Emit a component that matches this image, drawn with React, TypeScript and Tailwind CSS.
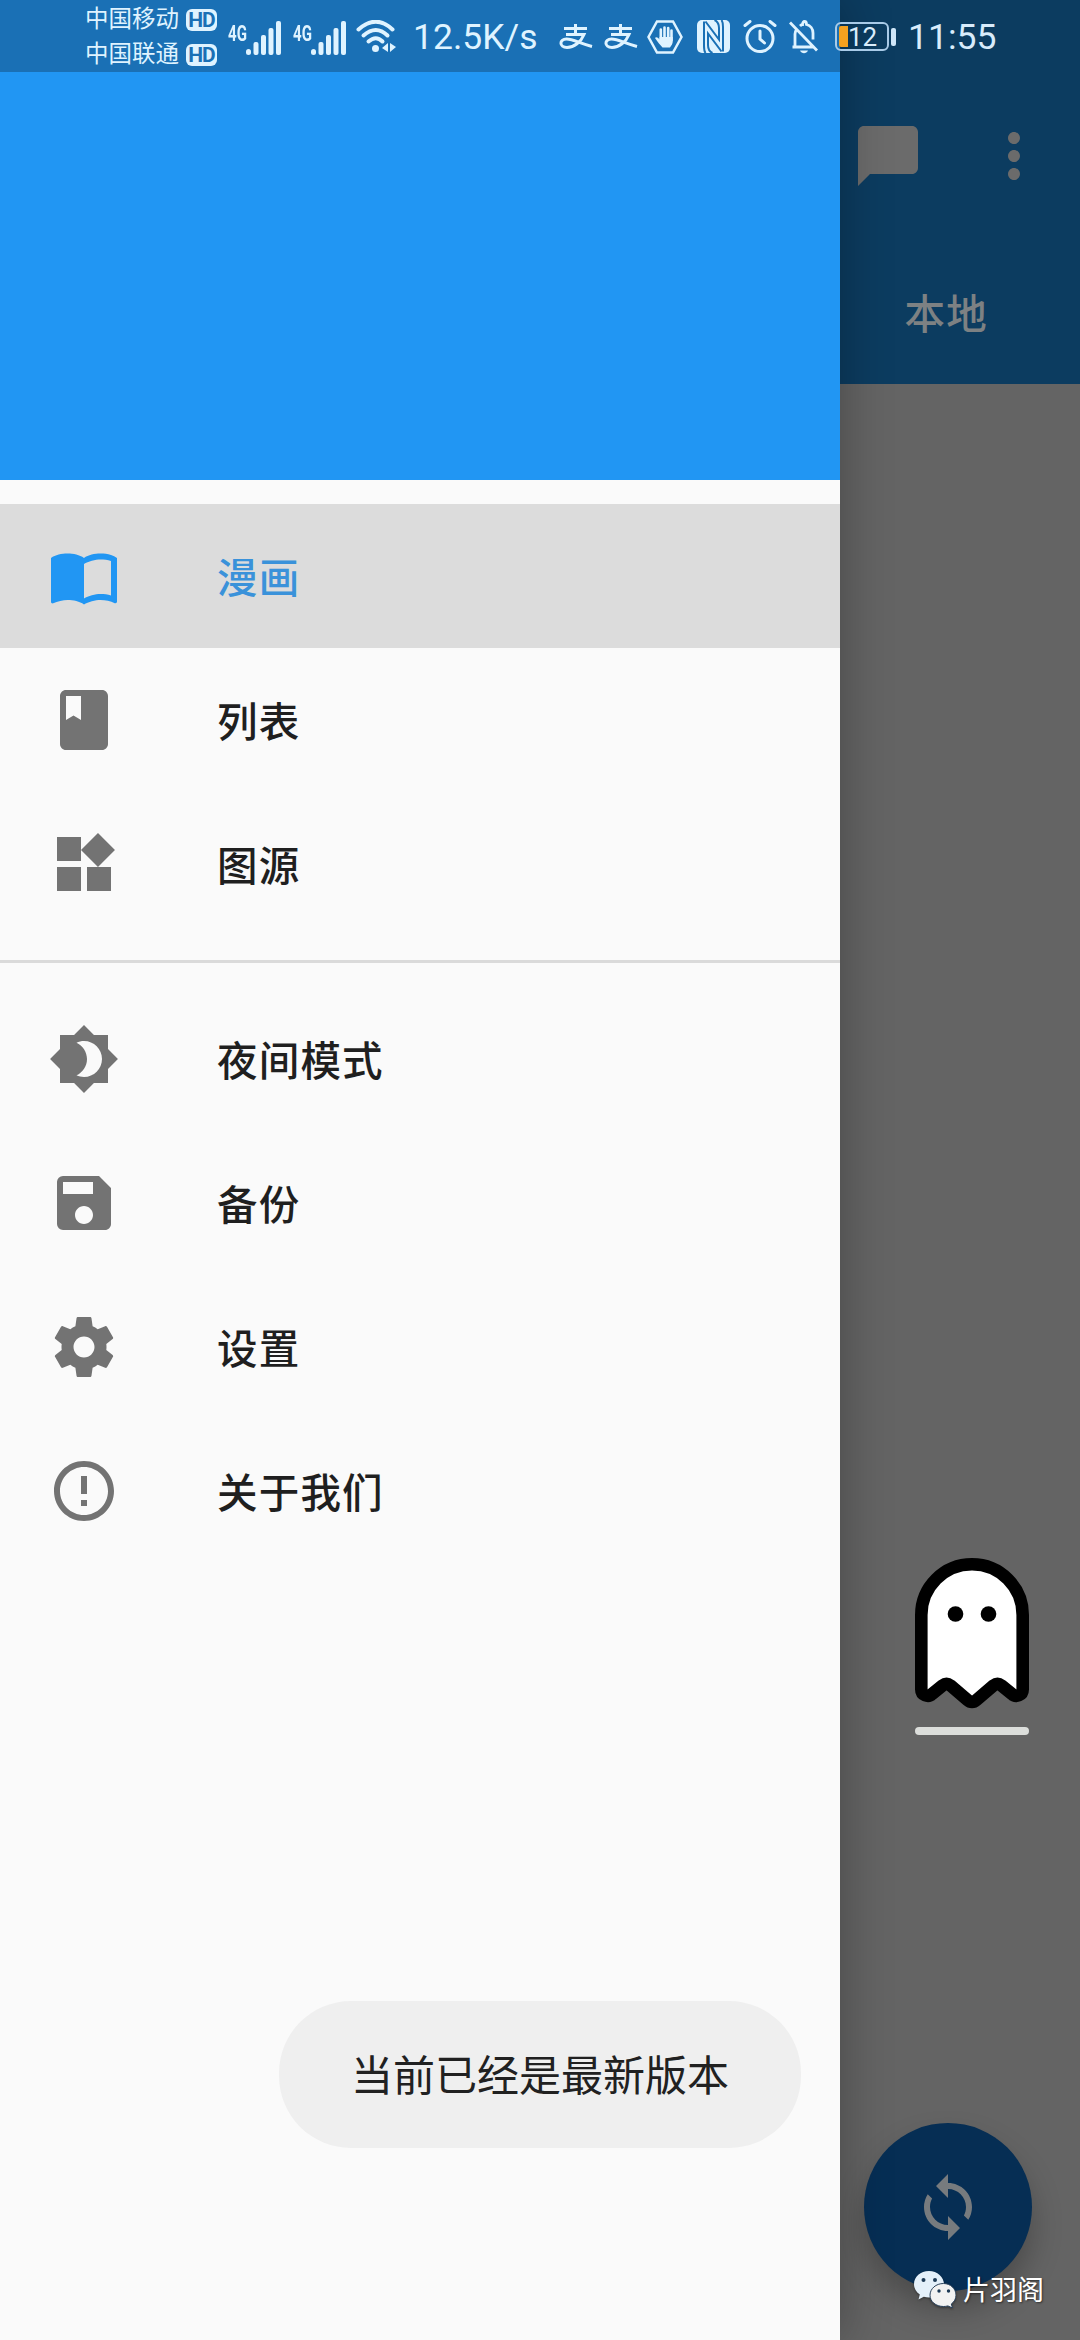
import type { ReactNode } from 'react';
import {
  MdBrightness4,
  MdChatBubble,
  MdClass,
  MdErrorOutline,
  MdMoreVert,
  MdSave,
  MdSync,
  MdWidgets,
} from 'react-icons/md';

type Item = {
  label: string;
  icon: ReactNode;
  active?: boolean;
};

function BookIcon() {
  return (
    <svg viewBox="0 0 24 24" className="size-[72px]" fill="currentColor">
      <path d="M21 5c-1.11-.35-2.33-.5-3.5-.5-1.95 0-4.05.4-5.5 1.5-1.45-1.1-3.55-1.5-5.5-1.5S2.45 4.9 1 6v14.65c0 .25.25.5.5.5.1 0 .15-.05.25-.05C3.1 20.45 5.05 20 6.5 20c1.95 0 4.05.4 5.5 1.5 1.35-.85 3.8-1.5 5.5-1.5 1.65 0 3.35.3 4.75 1.05.1.05.15.05.25.05.25 0 .5-.25.5-.5V6c-.6-.45-1.25-.75-2-1zm0 13.5c-1.1-.35-2.3-.5-3.5-.5-1.7 0-4.15.65-5.5 1.5V8c1.35-.85 3.8-1.5 5.5-1.5 1.2 0 2.4.15 3.5.5v11.5z" />
    </svg>
  );
}

function GearIcon() {
  return (
    <svg viewBox="0 0 24 24" className="size-[72px]" fill="currentColor">
      <path d="M19.43 12.98c.04-.32.07-.64.07-.98s-.03-.66-.07-.98l2.11-1.65c.19-.15.24-.42.12-.64l-2-3.46c-.12-.22-.39-.3-.61-.22l-2.49 1c-.52-.4-1.08-.73-1.69-.98l-.38-2.65C14.46 2.18 14.25 2 14 2h-4c-.25 0-.46.18-.49.42l-.38 2.65c-.61.25-1.17.59-1.69.98l-2.49-1c-.23-.09-.49 0-.61.22l-2 3.46c-.13.22-.07.49.12.64l2.11 1.65c-.04.32-.07.65-.07.98s.03.66.07.98l-2.11 1.65c-.19.15-.24.42-.12.64l2 3.46c.12.22.39.3.61.22l2.49-1c.52.4 1.08.73 1.69.98l.38 2.65c.03.24.24.42.49.42h4c.25 0 .46-.18.49-.42l.38-2.65c.61-.25 1.17-.59 1.69-.98l2.49 1c.23.09.49 0 .61-.22l2-3.46c.12-.22.07-.49-.12-.64l-2.11-1.65zM12 15.5c-1.93 0-3.5-1.57-3.5-3.5s1.57-3.5 3.5-3.5 3.5 1.57 3.5 3.5-1.57 3.5-3.5 3.5z" />
    </svg>
  );
}

const mainItems: Item[] = [
  { label: '漫画', icon: <BookIcon />, active: true },
  { label: '列表', icon: <MdClass className="size-[72px]" /> },
  { label: '图源', icon: <MdWidgets className="size-[72px]" /> },
];

const moreItems: Item[] = [
  { label: '夜间模式', icon: <MdBrightness4 className="size-[72px]" /> },
  { label: '备份', icon: <MdSave className="size-[72px]" /> },
  { label: '设置', icon: <GearIcon /> },
  { label: '关于我们', icon: <MdErrorOutline className="size-[72px]" /> },
];

function DrawerItem({ label, icon, active }: Item) {
  return (
    <li className={active ? 'flex h-36 items-center bg-[#dcdcdc] pl-12 text-[#2196f3]' : 'flex h-36 items-center pl-12 text-[#737373]'}>
      {icon}
      <span className={active ? 'ml-[97px] pt-[7px] text-[40.5px] leading-none font-medium tracking-[1.2px] text-[#3a92da]' : 'ml-[97px] pt-[7px] text-[40.5px] leading-none font-medium tracking-[1.2px] text-[#1f1f1f]'}>
        {label}
      </span>
    </li>
  );
}

function Carrier({ name }: { name: string }) {
  return (
    <div className="flex h-[35px] items-center">
      <span className="w-[101px] text-[23.5px] leading-none">{name}</span>
      <span className="flex h-[22px] w-[31px] items-center justify-center rounded-[6px] bg-[#dff3ff] text-[21px] leading-none font-bold tracking-tighter text-[#1a70b5]">
        HD
      </span>
    </div>
  );
}

function Signal() {
  return (
    <div className="flex w-[54px]">
      <span className="w-[18px] origin-left scale-x-[0.7] text-[21.5px] leading-[30px] font-bold">4G</span>
      <svg viewBox="0 0 36 34" className="mt-0.5 h-[34px] w-9" fill="currentColor">
        <rect x="0" y="28" width="5" height="6" rx="2.5" />
        <rect x="7.5" y="21" width="5" height="13" rx="2" />
        <rect x="15" y="14" width="5" height="20" rx="2" />
        <rect x="22.5" y="7" width="5" height="27" rx="2" />
        <rect x="30" y="0" width="5" height="34" rx="2" />
      </svg>
    </div>
  );
}

function WifiIcon() {
  return (
    <svg viewBox="0 0 40 34" className="ml-[9px] h-[34px] w-10" fill="none" stroke="currentColor" strokeWidth="4" strokeLinecap="round">
      <path d="M2.5 9.5Q20-6 36.5 9.5" />
      <path d="M7.5 15.5Q20 4.5 31.5 15.5" />
      <path d="M12.5 21.5Q20 15 26.5 21.5" />
      <circle cx="19.5" cy="28.5" r="3.5" fill="currentColor" stroke="none" />
      <path d="M26 28l6-5v9zM40 27l-6-4v9z" fill="currentColor" stroke="none" />
    </svg>
  );
}

function AlipayIcon() {
  return (
    <svg viewBox="0 0 34 26" className="h-[26px] w-[34px]" fill="none" stroke="currentColor" strokeWidth="3">
      <path d="M5 4.5h23M16.5 0v10M7 10.500h18C22 18 15 23.500 8 23.500c-8 0-8-8.500-.5-8.500C14 15 20 19 33 22.500" />
    </svg>
  );
}

function HandIcon() {
  return (
    <svg viewBox="0 0 36 34" className="ml-[9px] h-[34px] w-9" fill="none" stroke="currentColor">
      <path d="M10 1.5h16L34.5 17 26 32.5H10L1.5 17z" strokeWidth="2.5" />
      <path d="M13.8 9.5V19M17.5 7.5V18M21.2 8V18M24.5 10.5V20" strokeWidth="2.6" strokeLinecap="round" />
      <path d="M12.5 17h13.3v4c0 3-1.5 4.5-2.8 6.5h-7.500c-2-2.500-5.500-6-7.500-9.500 1-1.500 3-.5 4.500 1.500z" fill="currentColor" stroke="none" />
    </svg>
  );
}

function NfcIcon() {
  return (
    <svg viewBox="0 0 34 34" className="ml-[14px] size-[34px]">
      <rect width="33" height="33" rx="5" fill="currentColor" />
      <path d="M8.5 1.5L22 19.500V8Q22 2 17.500 0M24.500 31.500L11 13.500V25Q11 31 15.500 33M24.500 0Q26 2 26 7V31.500M8.500 33Q7 31 7 26V1.500" fill="none" stroke="#1a70b5" strokeWidth="2" />
    </svg>
  );
}

function AlarmIcon() {
  return (
    <svg viewBox="0 0 34 34" className="ml-3 size-[34px]" fill="none" stroke="currentColor" strokeWidth="3" strokeLinecap="round">
      <circle cx="17" cy="18.5" r="13" />
      <path d="M17 11v8l4.5 4M2 5.5L7 1.5M32 5.5L27 1.5" />
    </svg>
  );
}

function BellOffIcon() {
  return (
    <svg viewBox="0 0 30 34" className="ml-3 h-[34px] w-[30px]" fill="none" stroke="currentColor" strokeWidth="2.8">
      <path d="M1 2.5L28 30.500M3.500 27H24M6 26V14c0-2 .5-3 1.500-4.500M11 6c1-1 2-1.500 2.500-1.500 0-4 4-4 4 0 4 1 6.500 4.500 6.500 8.500v6.500" />
      <path d="M11 30.500h8c-1.500 3.500-6.500 3.500-8 0z" fill="currentColor" stroke="none" />
    </svg>
  );
}

function Battery() {
  return (
    <div className="ml-4 flex items-center text-[#d9ecfb]">
      <div className="flex h-[29px] w-[54px] items-center rounded-[6px] border-2 border-[#a9cbe8] pl-[2px]">
        <span className="h-[21px] w-[9px] rounded-l-xs bg-[#f5a11f]" />
        <span className="text-[26px] leading-none">12</span>
      </div>
      <span className="ml-0.5 h-[18px] w-[5px] rounded-[2px] bg-[#cfe6f8]" />
    </div>
  );
}

function StatusBar() {
  return (
    <div className="absolute inset-x-0 top-0 flex h-[73px] items-center pl-[85px] text-[#dff3ff]">
      <div className="flex w-[143px] shrink-0 flex-col pt-0.5">
        <Carrier name="中国移动" />
        <Carrier name="中国联通" />
      </div>
      <div className="flex gap-[11px]">
        <Signal />
        <Signal />
      </div>
      <WifiIcon />
      <span className="ml-[17px] w-[128px] pt-0.5 text-[35.5px] leading-none">12.5K/s</span>
      <div className="ml-[18px] flex gap-[11px]">
        <AlipayIcon />
        <AlipayIcon />
      </div>
      <HandIcon />
      <NfcIcon />
      <AlarmIcon />
      <BellOffIcon />
      <Battery />
      <span className="ml-[12px] pt-0.5 text-[35.5px] leading-none text-[#d9ecfb]">11:55</span>
    </div>
  );
}

function Drawer() {
  return (
    <aside className="absolute inset-y-0 left-0 w-[840px] bg-[#fafafa] shadow-[0_0_48px_rgba(0,0,0,0.3)]">
      <div className="h-[72px] bg-[#1a70b5]" />
      <div className="h-[408px] bg-[#2196f3]" />
      <nav className="pt-6">
        <ul>
          {mainItems.map((item) => (
            <DrawerItem key={item.label} {...item} />
          ))}
        </ul>
        <hr className="mt-6 mb-6 border-t-3 border-[#dadada]" />
        <ul>
          {moreItems.map((item) => (
            <DrawerItem key={item.label} {...item} />
          ))}
        </ul>
      </nav>
    </aside>
  );
}

function Ghost() {
  return (
    <div className="absolute top-[1558px] left-[915px] flex w-[114px] flex-col gap-[18px]">
      <svg viewBox="0 0 114 151" className="h-[151px] w-[114px]">
        <path
          d="M6.3 57A50.7 50.7 0 0 1 107.7 57V131.5A6.3 6.3 0 0 1 97 136L86.5 127.5Q82.5 124.5 78.5 127.5L61.5 142Q57 146 52.5 142L35.5 127.5Q31.5 124.5 27.5 127.5L17 136A6.3 6.3 0 0 1 6.3 131.5Z"
          fill="#fff"
          stroke="#000"
          strokeWidth="12.6"
        />
        <circle cx="40.5" cy="56" r="7.8" />
        <circle cx="73.5" cy="56" r="7.8" />
      </svg>
      <div className="h-2 rounded-full bg-[#dcdedb]" />
    </div>
  );
}

function WeChatLogo() {
  return (
    <svg viewBox="0 0 42 37" className="h-[37px] w-[42px] drop-shadow-[0_1px_1px_rgba(0,0,0,0.4)]">
      <path d="M15 0C6.5 0 0 5.8 0 13.3c0 4.3 2.2 7.9 5.8 10.3L4.5 28.5l5.3-2.7c1.7.5 3.3.7 5.2.7 8.3 0 15-5.9 15-13.2S23.3 0 15 0z" fill="#e4f0fa" />
      <path d="M29.5 12.5C22 12.5 16 17.7 16 24.2s6 11.3 13.5 11.3c1.5 0 3-.2 4.4-.6l4.6 2.1-1.2-4c2.9-2.1 4.7-5.2 4.7-8.8 0-6.5-5.5-11.7-12.5-11.7z" fill="#f2f2f2" stroke="#28405a" strokeWidth="1" />
      <g fill="#1d3a56">
        <circle cx="9.5" cy="9" r="2" />
        <circle cx="21" cy="9" r="2" />
        <circle cx="25" cy="20" r="1.7" />
        <circle cx="34.5" cy="20" r="1.7" />
      </g>
    </svg>
  );
}

export default function App() {
  return (
    <div className="relative h-[2340px] w-[1080px] overflow-hidden bg-[#646464] font-[Roboto,'Noto_Sans_CJK_SC',sans-serif]">
      <header className="h-96 bg-[#0c3c60] pt-[72px] text-[#6b6b6b]">
        <div className="flex h-[168px] items-center justify-end gap-[54px] pr-[30px]">
          <MdChatBubble className="size-[72px]" />
          <MdMoreVert className="size-[72px]" />
        </div>
        <div className="flex h-36 items-center justify-end pr-[92px]">
          <span className="pt-[7px] text-[40.5px] leading-none font-medium tracking-[1.2px] text-[#7d8183]">本地</span>
        </div>
      </header>

      <button className="absolute top-[2123px] left-[864px] flex size-[168px] items-center justify-center rounded-full bg-[#062e54] text-[#777b7e] shadow-[0_18px_30px_rgba(0,0,0,0.25)]">
        <MdSync className="size-[72px]" />
      </button>

      <Drawer />
      <StatusBar />
      <Ghost />

      <div className="absolute top-[2001px] left-[279px] flex h-[147px] w-[522px] items-center justify-center rounded-[72px] bg-[#efefef] pt-1 text-[42px] leading-none text-[#212121]">
        当前已经是最新版本
      </div>

      <div className="absolute top-[2271px] left-[914px] flex items-center gap-[7px]">
        <WeChatLogo />
        <span className="pt-1 text-[27px] leading-none text-white [text-shadow:1px_1px_2px_rgba(0,0,0,0.5)]">片羽阁</span>
      </div>
    </div>
  );
}
